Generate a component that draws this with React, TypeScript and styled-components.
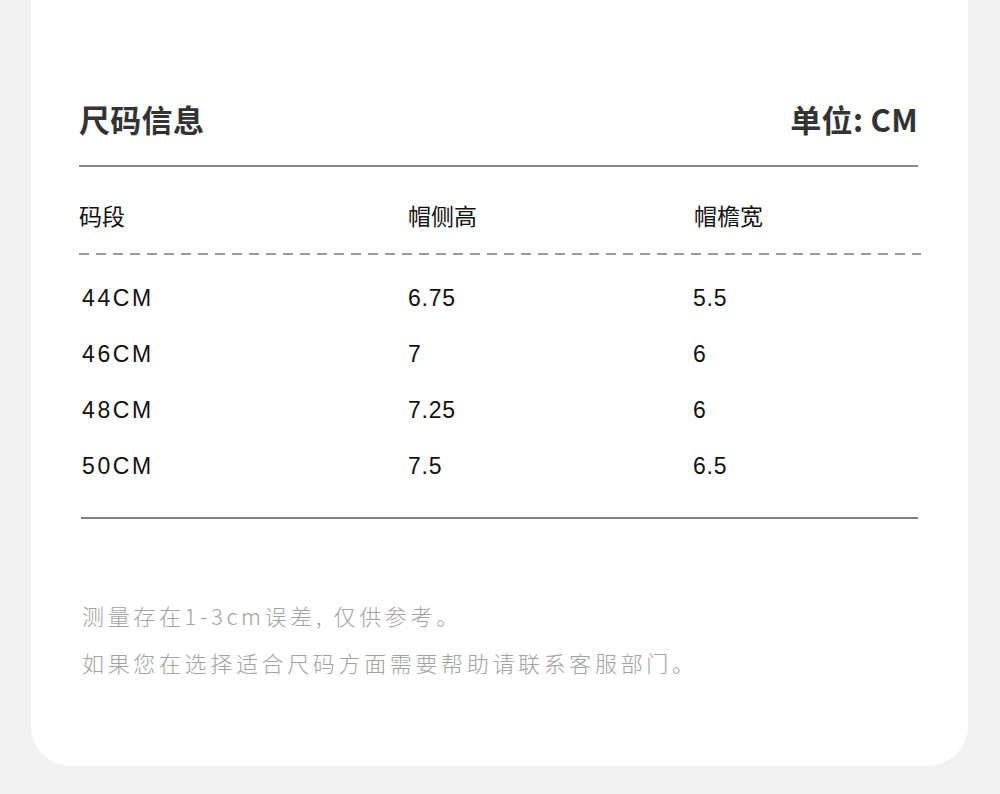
import styled, {createGlobalStyle} from "styled-components";

const sizeRows = [
  {range: '44CM', sideHeight: '6.75', brimWidth: '5.5'},
  {range: '46CM', sideHeight: '7', brimWidth: '6'},
  {range: '48CM', sideHeight: '7.25', brimWidth: '6'},
  {range: '50CM', sideHeight: '7.5', brimWidth: '6.5'},
]

const notes = [
  '测量存在1-3cm误差, 仅供参考。',
  '如果您在选择适合尺码方面需要帮助请联系客服部门。',
]

export default function App() {
  return (
    <>
      <GlobalStyle/>
      <StyledPage>
        <StyledCard>
          <StyledHeader>
            <StyledTitle>尺码信息</StyledTitle>
            <StyledTitle>单位: CM</StyledTitle>
          </StyledHeader>

          <StyledTableHead>
            <StyledHeadCell>码段</StyledHeadCell>
            <StyledHeadCell>帽侧高</StyledHeadCell>
            <StyledHeadCell>帽檐宽</StyledHeadCell>
          </StyledTableHead>

          <StyledDashedRule/>

          <StyledTableBody>
            {sizeRows.map((row) => (
              <StyledRow key={row.range}>
                <StyledCell $first>{row.range}</StyledCell>
                <StyledCell>{row.sideHeight}</StyledCell>
                <StyledCell>{row.brimWidth}</StyledCell>
              </StyledRow>
            ))}
          </StyledTableBody>

          <StyledNotes>
            {notes.map((note) => (
              <StyledNote key={note}>{note}</StyledNote>
            ))}
          </StyledNotes>
        </StyledCard>
      </StyledPage>
    </>
  )
}

const GlobalStyle = createGlobalStyle`
  html, body {
    margin: 0;
    padding: 0;
    background: #f1f1f1;
  }
  body {
    font-family: "Noto Sans CJK SC", "Noto Sans", sans-serif;
  }
`

const StyledPage = styled.main`
  width: 1000px;
  height: 794px;
  overflow: hidden;
  background: #f1f1f1;
`

const StyledCard = styled.section`
  margin: 0 32px 0 31px;
  padding: 99px 50px 80px 48px;
  background: #ffffff;
  border-radius: 0 0 40px 40px;
`

const StyledHeader = styled.header`
  display: flex;
  justify-content: space-between;
  align-items: center;
  padding-bottom: 26px;
  border-bottom: 2px solid #8a8a8a;
`

const StyledTitle = styled.h1`
  margin: 0;
  font-size: 31px;
  line-height: 40px;
  font-weight: 700;
  letter-spacing: 0.3px;
  color: #333333;
`

const StyledTableHead = styled.div`
  display: grid;
  grid-template-columns: 329px 286px 1fr;
  padding: 30px 0 20px;
`

const StyledHeadCell = styled.span`
  font-size: 23px;
  line-height: 36px;
  color: #111111;
`

const StyledDashedRule = styled.div`
  height: 2px;
  margin-right: -3px;
  background-image: linear-gradient(to right, #9a9a9a 0 10px, transparent 10px 17px);
  background-size: 17px 2px;
  background-repeat: repeat-x;
`

const StyledTableBody = styled.div`
  display: flex;
  flex-direction: column;
  margin-left: 2px;
  padding: 15px 0 23px;
  border-bottom: 2px solid #808080;
`

const StyledRow = styled.div`
  display: grid;
  grid-template-columns: 327px 285px 1fr;
  height: 56px;
  align-items: center;
`

const StyledCell = styled.span<{ $first?: boolean }>`
  padding-left: ${props => props.$first ? '1px' : '0'};
  font-family: "Liberation Sans", "Noto Sans", sans-serif;
  font-size: 23px;
  letter-spacing: ${props => props.$first ? '2.6px' : '0.8px'};
  color: #111111;
`

const StyledNotes = styled.div`
  display: flex;
  flex-direction: column;
  margin-top: 73px;
  padding-left: 3px;
`

const StyledNote = styled.p`
  margin: 0;
  font-size: 22px;
  line-height: 47px;
  letter-spacing: 3.65px;
  font-weight: 300;
  color: #a2a2a2;
`
